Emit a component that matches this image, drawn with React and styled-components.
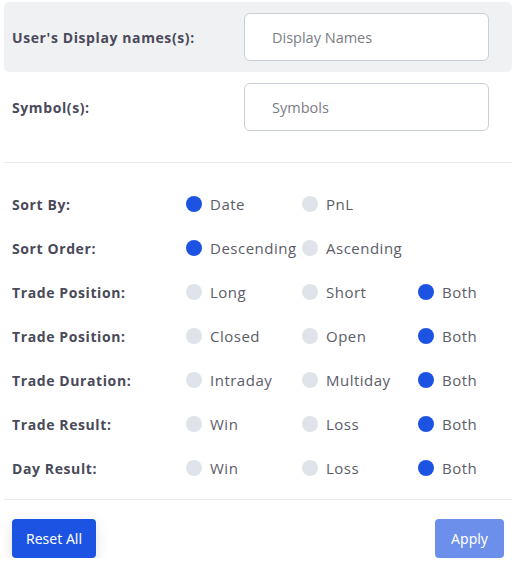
import React, { useState } from "react";
import styled, { createGlobalStyle } from "styled-components";

const GlobalStyle = createGlobalStyle`
  body {
    margin: 0;
    background: #ffffff;
    font-family: "Open Sans", "Noto Sans", sans-serif;
  }
  * { box-sizing: border-box; }
`;

const Panel = styled.div`
  width: 517px;
  padding: 2px 5px 0 4px;
`;

const FieldRow = styled.div`
  display: flex;
  align-items: center;
  height: 70px;
  padding: 0 23px 0 8px;
  border-radius: 5px;
  background: ${(p) => (p.$shaded ? "#f0f1f3" : "transparent")};
`;

const FieldLabel = styled.label`
  width: 232px;
  font-size: 14px;
  font-weight: 700;
  letter-spacing: 0.6px;
  color: #4a4a5a;
`;

const TextInput = styled.input`
  width: 245px;
  height: 48px;
  padding: 0 0 0 27px;
  border: 1px solid #c9cfd8;
  border-radius: 6px;
  background: #fff;
  font-family: inherit;
  font-size: 14.5px;
  color: #333;
  outline: none;
  &::placeholder {
    color: #7a7d85;
  }
`;

const Divider = styled.hr`
  margin: ${(p) => p.$margin};
  border: 0;
  border-top: 1px solid #e8e9ec;
`;

const RadioList = styled.div`
  padding-top: 19px;
`;

const RadioRow = styled.div`
  display: flex;
  align-items: center;
  height: 44px;
  padding-left: 8px;
`;

const RowLabel = styled.div`
  flex: none;
  width: 174px;
  font-size: 14px;
  font-weight: 700;
  letter-spacing: 0.6px;
  color: #4a4a5a;
`;

const Option = styled.div`
  display: flex;
  flex: none;
  align-items: center;
  width: 116px;
  cursor: pointer;
  white-space: nowrap;
  &:last-child {
    width: auto;
  }
`;

const Dot = styled.span`
  flex: none;
  width: 16px;
  height: 16px;
  border-radius: 50%;
  margin-right: 8px;
  background: ${(p) => (p.$on ? "#1c53e3" : "#dfe4eb")};
`;

const OptionText = styled.span`
  font-size: 15px;
  letter-spacing: 0.5px;
  color: #5b5d69;
`;

const Footer = styled.div`
  display: flex;
  justify-content: space-between;
  padding: 0 8px;
`;

const Button = styled.button`
  height: 39px;
  padding: 0 ${(p) => (p.$wide ? "14px" : "16px")};
  border: 0;
  border-radius: 4px;
  font-family: "Noto Sans", sans-serif;
  font-size: 14px;
  color: #fff;
  background: ${(p) => (p.$muted ? "#6b8fea" : "#1c53e3")};
  box-shadow: ${(p) => (p.$muted ? "none" : "0 4px 14px rgba(0,0,0,0.12)")};
  cursor: pointer;
`;

const groups = [
  { label: "Sort By:", options: ["Date", "PnL"], pick: 0 },
  { label: "Sort Order:", options: ["Descending", "Ascending"], pick: 0 },
  { label: "Trade Position:", options: ["Long", "Short", "Both"], pick: 2 },
  { label: "Trade Position:", options: ["Closed", "Open", "Both"], pick: 2 },
  { label: "Trade Duration:", options: ["Intraday", "Multiday", "Both"], pick: 2 },
  { label: "Trade Result:", options: ["Win", "Loss", "Both"], pick: 2 },
  { label: "Day Result:", options: ["Win", "Loss", "Both"], pick: 2 },
];

export default function App() {
  const [picks, setPicks] = useState(groups.map((g) => g.pick));

  const choose = (row, idx) =>
    setPicks((prev) => prev.map((v, i) => (i === row ? idx : v)));

  return (
    <Panel>
      <GlobalStyle />
      <FieldRow $shaded>
        <FieldLabel>User's Display names(s):</FieldLabel>
        <TextInput placeholder="Display Names" />
      </FieldRow>
      <FieldRow>
        <FieldLabel>Symbol(s):</FieldLabel>
        <TextInput placeholder="Symbols" />
      </FieldRow>
      <Divider $margin="20px 0 0" />
      <RadioList>
        {groups.map((g, row) => (
          <RadioRow key={row}>
            <RowLabel>{g.label}</RowLabel>
            {g.options.map((opt, idx) => (
              <Option key={opt} onClick={() => choose(row, idx)}>
                <Dot $on={picks[row] === idx} />
                <OptionText>{opt}</OptionText>
              </Option>
            ))}
          </RadioRow>
        ))}
      </RadioList>
      <Divider $margin="9px 0 19px" />
      <Footer>
        <Button $wide>Reset All</Button>
        <Button $muted>Apply</Button>
      </Footer>
    </Panel>
  );
}
